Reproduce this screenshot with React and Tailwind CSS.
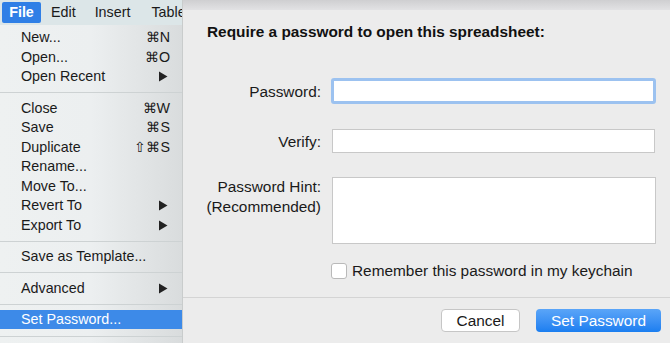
import React from "react";

const font = { fontFamily: '"Helvetica Neue", "Liberation Sans", Arial, sans-serif' };

function Arrow() {
  return (
    <svg width="10" height="11" viewBox="0 0 10 11"><path d="M1 0.5 L9.5 5.5 L1 10.5 Z" fill="#222" /></svg>
  );
}

function Item({ label, sc, arrow }) {
  return (
    <div className="flex h-[19.5px] items-center pl-[21px] pr-[12px] text-[14.3px] text-[#1a1a1a]">
      <span className="flex-1">{label}</span>
      {sc && <span>{sc}</span>}
      {arrow && <span className="mr-[2px] flex items-center"><Arrow /></span>}
    </div>
  );
}

function Sep() {
  return <div className="my-[5.5px] h-px bg-[#cdd2d3]" />;
}

export default function App() {
  return (
    <div className="flex h-[343px] w-[670px] overflow-hidden bg-[#ececec]" style={font}>
      {/* Menu */}
      <div className="flex w-[183px] shrink-0 flex-col overflow-hidden bg-gradient-to-r from-[#eef1f1] via-[#eceff0] to-[#d9dcdd] border-r border-[#c9cccc]">
        <div className="flex h-[25px] items-center overflow-hidden bg-[#dce6e8] text-[14.3px] text-[#1a1a1a]">
          <div className="ml-[2px] flex h-[21px] w-[39px] shrink-0 items-center justify-center rounded-[2px] bg-[#2f7fe6] font-bold text-white">File</div>
          <span className="ml-[10px] shrink-0">Edit</span>
          <span className="ml-[19px] shrink-0">Insert</span>
          <span className="ml-[21px] shrink-0 whitespace-nowrap">Table</span>
        </div>
        <div className="pt-[3px]">
          <Item label="New..." sc="⌘N" />
          <Item label="Open..." sc="⌘O" />
          <Item label="Open Recent" arrow />
          <Sep />
          <Item label="Close" sc="⌘W" />
          <Item label="Save" sc="⌘S" />
          <Item label="Duplicate" sc="⇧⌘S" />
          <Item label="Rename..." />
          <Item label="Move To..." />
          <Item label="Revert To" arrow />
          <Item label="Export To" arrow />
          <Sep />
          <Item label="Save as Template..." />
          <Sep />
          <Item label="Advanced" arrow />
          <Sep />
          <div className="flex h-[19px] items-center bg-[#3d8ae8] pl-[21px] text-[14.3px] text-white">Set Password...</div>
          <div className="mt-[7px] h-px bg-[#cdd2d3]" />
        </div>
      </div>
      {/* Dialog */}
      <div className="flex flex-1 flex-col bg-[#ececec] text-[15.4px]">
        <div className="h-[10px] bg-gradient-to-b from-[#cfcfd1] to-[#e2e2e4]" />
        <div className="pl-[24px] pt-[10px] font-bold text-[#111]">Require a password to open this spreadsheet:</div>
        <div className="mt-[35px] flex items-center">
          <div className="w-[138px] text-right text-[#1a1a1a]">Password:</div>
          <div className="ml-[10px] h-[26px] w-[325px] rounded-[3px] border-[3px] border-[#9cc2f0] bg-white" />
        </div>
        <div className="mt-[25px] flex items-center">
          <div className="w-[138px] text-right text-[#1a1a1a]">Verify:</div>
          <div className="ml-[11px] h-[24px] w-[323px] border border-[#c8c8c8] bg-white" />
        </div>
        <div className="mt-[24px] flex items-start">
          <div className="w-[138px] text-right leading-[20px] text-[#1a1a1a]">Password Hint:<br />(Recommended)</div>
          <div className="ml-[11px] h-[67px] w-[324px] border border-[#c8c8c8] bg-white" />
        </div>
        <div className="ml-[148px] mt-[15px] flex items-center">
          <div className="h-[16px] w-[16px] rounded-[3px] border border-[#b9b9b9] bg-white" />
          <span className="ml-[5px] text-[#1a1a1a]">Remember this password in my keychain</span>
        </div>
        <div className="mt-[15px] h-px bg-[#d4d4d4]" />
        <div className="mt-[11px] flex justify-end pr-[9px]">
          <div className="flex h-[23px] w-[79px] items-center justify-center rounded-[4px] border border-[#c6c6c6] bg-white text-[#1a1a1a]">Cancel</div>
          <div className="ml-[16px] flex h-[23px] w-[125px] items-center justify-center rounded-[4px] bg-gradient-to-b from-[#5aa5f8] to-[#1a7ef0] text-white">Set Password</div>
        </div>
      </div>
    </div>
  );
}
